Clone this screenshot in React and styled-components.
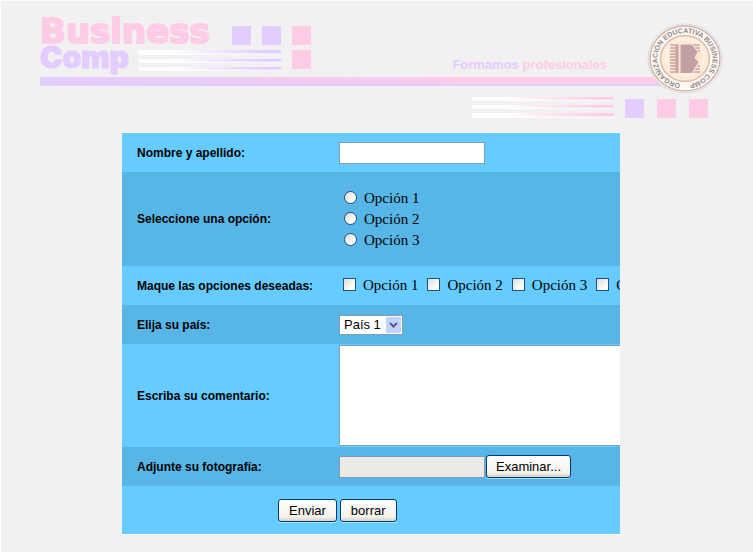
import React, { useRef, useState } from "react";
import styled, { createGlobalStyle } from "styled-components";

const LILAC = "#e3ccff";
const PINK = "#ffcce6";

const GlobalStyle = createGlobalStyle`
  *, *::before, *::after { box-sizing: border-box; }
  body {
    margin: 0;
    background: #f1f1f1;
    font-family: "Liberation Sans", Arial, sans-serif;
    color: #000;
  }
`;

const Page = styled.div`
  min-height: 100vh;
  border: solid #fff;
  border-width: 1px 0 0 1px;
`;

const Header = styled.header`
  position: relative;
  padding: 17px 45px 0 39px;
`;

const BrandLine = styled.div`
  display: flex;
  align-items: flex-start;
  height: ${(p) => (p.$last ? 33 : 26)}px;
`;

const BrandWord = styled.span`
  flex: none;
  width: ${(p) => p.$width}px;
  color: ${(p) => p.$color};
  font: ${(p) => p.$font};
  line-height: 26px;
  white-space: nowrap;
  -webkit-text-stroke: ${(p) => p.$stroke}px ${(p) => p.$color};
`;

const Squares = styled.div`
  display: flex;
  gap: 11px;
  padding-top: ${(p) => p.$top || 0}px;
  margin-left: ${(p) => p.$left || 0}px;
`;

const Square = styled.span`
  width: 19px;
  height: 19px;
  background: ${(p) => p.$color};
`;

const Stripes = styled.div`
  display: flex;
  flex-direction: column;
  justify-content: space-between;
  width: 142px;
  height: 21px;
  margin-top: ${(p) => p.$top || 0}px;
`;

const Stripe = styled.span`
  height: ${(p) => p.$h}px;
  background:
    linear-gradient(to right, #fff 20%, transparent 90%),
    linear-gradient(to bottom, ${(p) => p.$color} 45%, #fff);
`;

const Tagline = styled.p`
  margin: 13px 101px 0 auto;
  font-size: 13px;
  line-height: 16px;
  font-weight: bold;
  white-space: nowrap;
  color: ${PINK};
`;

const Accent = styled.span`
  color: ${LILAC};
`;

const Bar = styled.div`
  height: 9px;
  background:
    linear-gradient(to right, ${LILAC}, transparent 70%),
    linear-gradient(to bottom, ${PINK} 65%, ${LILAC} 75%);
`;

const LowerDecor = styled.div`
  display: flex;
  justify-content: flex-end;
  gap: 11px;
  padding-top: 11px;
`;

const LowerSquares = styled(Squares)`
  gap: 13px;
  padding-top: 2px;
`;

const Emblem = styled.svg`
  position: absolute;
  top: 22px;
  right: 30px;
  width: 76px;
  height: 71px;
`;

const Form = styled.form`
  margin: 14px 133px 0 121px;
  border: solid #fff;
  border-width: 1px 0;
  overflow: hidden;
`;

const Row = styled.div`
  display: grid;
  grid-template-columns: 202px minmax(0, 1fr);
  align-items: center;
  min-height: ${(p) => p.$h || 39}px;
  padding-left: 15px;
  background: ${(p) => (p.$dark ? "#58b6e7" : "#66ccff")};
`;

const RowLabel = styled.label`
  font-size: 12px;
  line-height: 16px;
  font-weight: bold;
`;

const Field = styled.div`
  display: flex;
  align-items: center;
`;

const TextBox = styled.input`
  width: 146px;
  height: 22px;
  padding: 1px 3px;
  border: 1px solid #7f9db9;
  border-radius: 0;
  outline: none;
  background: ${(p) => (p.readOnly ? "#ebeae5" : "#fff")};
  font: 13px "Liberation Sans", Arial, sans-serif;
`;

const RadioList = styled.div`
  padding: 1px 0 0 5px;
`;

const CheckList = styled.div`
  display: flex;
  gap: 9px;
  padding-left: 4px;
  overflow: hidden;
`;

const Choice = styled.label`
  display: flex;
  flex: none;
  align-items: center;
  gap: 7px;
  font: 15px "Liberation Serif", "Times New Roman", serif;
  line-height: 21px;
  white-space: nowrap;
`;

const Tick = styled.input`
  appearance: none;
  flex: none;
  width: 13px;
  height: 13px;
  margin: 0 0 2px;
  border: 1px solid #1c5180;
  border-radius: ${(p) => (p.type === "radio" ? "50%" : "0")};
  background: linear-gradient(135deg, #dcdcd7, #fff 75%);
  &:checked {
    background: radial-gradient(circle, #21a121 35%, #fff 40%);
  }
`;

const SelectWrap = styled.span`
  position: relative;
  display: inline-flex;
`;

const Select = styled.select`
  appearance: none;
  width: 64px;
  height: 20px;
  padding: 0 18px 0 4px;
  border: 1px solid #7f9db9;
  border-radius: 0;
  background: #fff;
  color: #000;
  font: 13px "Liberation Sans", Arial, sans-serif;
`;

const SelectArrow = styled.svg`
  position: absolute;
  top: 2px;
  right: 2px;
  width: 15px;
  height: 16px;
  pointer-events: none;
`;

const Comment = styled.textarea`
  display: block;
  flex: none;
  width: 110%;
  height: 101px;
  padding: 2px 4px;
  border: 1px solid #7f9db9;
  outline: none;
  resize: none;
  font: 13px "Liberation Mono", monospace;
`;

const Button = styled.button`
  height: 23px;
  padding: 0 ${(p) => p.$pad || 10}px;
  border: 1px solid #003c74;
  border-radius: 3px;
  background: linear-gradient(to bottom, #fff, #f3f2ec 80%, #d8d2c6);
  box-shadow: 0 1px 0 rgba(255, 255, 255, 0.5);
  color: #000;
  font: 13px "Liberation Sans", Arial, sans-serif;
  white-space: nowrap;
`;

const FileField = styled(Field)`
  gap: 1px;
`;

const Actions = styled.div`
  display: flex;
  align-items: center;
  gap: 3px;
  min-height: 48px;
  padding-left: 156px;
  background: #66ccff;
`;

function StripeGroup({ color, heights, top }) {
  return (
    <Stripes aria-hidden="true" $top={top}>
      {heights.map((h, i) => (
        <Stripe key={i} $color={color} $h={h} />
      ))}
    </Stripes>
  );
}

function BusinessEmblem() {
  const lines = Array.from({ length: 10 }, (_, i) => 22 + i * 3);
  return (
    <Emblem viewBox="0 0 76 71" role="img" aria-label="Organización Educativa Business Comp">
      <defs>
        <radialGradient id="gold" cx="50%" cy="48%" r="52%">
          <stop offset="0" stopColor="#fbd3ac" />
          <stop offset="0.55" stopColor="#fde2c6" />
          <stop offset="0.75" stopColor="#fff1e0" />
          <stop offset="1" stopColor="#f8d9bd" />
        </radialGradient>
        <path id="ring" d="M33.5 60.7 A27.5 25.5 0 1 1 42.5 60.7" />
      </defs>
      <ellipse cx="38" cy="35.5" rx="37" ry="34.5" fill="#fbfaf9" stroke="#dcd8d6" />
      <ellipse cx="38" cy="35.5" rx="35" ry="32.5" fill="#fffaf4" stroke="#cbb2ae" strokeWidth="1.5" />
      <ellipse cx="38" cy="35.5" rx="24.5" ry="23" fill="url(#gold)" stroke="#dcbcae" strokeWidth="1.5" />
      <ellipse cx="38" cy="35.5" rx="22.5" ry="21" fill="none" stroke="#fff4e8" />
      <text
        fontFamily="Liberation Sans, Arial, sans-serif"
        fontSize="7"
        fontWeight="bold"
        fill="#8e8788"
      >
        <textPath href="#ring">ORGANIZACIÓN EDUCATIVA BUSINESS COMP</textPath>
      </text>
      <g stroke="#c6a4a8" strokeWidth="1.4">
        {lines.map((y) => (
          <path key={y} d={`M23 ${y}H29M45 ${y}H${y > 29 && y < 42 ? 47 : 53}`} />
        ))}
      </g>
      <path d="M28.5 22L31.5 21V50.5L28.5 49.5Z" fill="#c6a4a8" />
      <path
        d="M33 21H45L51 29L48 35L52 39L45 50.5H33Z"
        fill="#c2a0a5"
        stroke="#fff0df"
      />
    </Emblem>
  );
}

const OPTIONS = [1, 2, 3];
const CHECKS = [1, 2, 3, 4];

export default function App() {
  const fileRef = useRef(null);
  const [fileName, setFileName] = useState("");

  return (
    <Page>
      <GlobalStyle />
      <Header>
        <BrandLine>
          <BrandWord
            $width={192}
            $color={PINK}
            $stroke={2}
            $font='bold 34px "DejaVu Sans", sans-serif'
          >
            Business
          </BrandWord>
          <Squares $top={8}>
            <Square $color={LILAC} />
            <Square $color={LILAC} />
            <Square $color={PINK} />
          </Squares>
        </BrandLine>
        <BrandLine $last>
          <BrandWord
            $width={99}
            $color={LILAC}
            $stroke={1}
            $font='900 30px Inter, "DejaVu Sans", sans-serif'
          >
            Comp
          </BrandWord>
          <StripeGroup color={LILAC} heights={[5, 4, 4]} top={6} />
          <Squares $top={6} $left={11}>
            <Square $color={PINK} />
          </Squares>
          <Tagline>
            <Accent>Formamos</Accent> profesionales
          </Tagline>
        </BrandLine>
        <Bar />
        <LowerDecor>
          <StripeGroup color={PINK} heights={[4, 4, 5]} />
          <LowerSquares>
            <Square $color={LILAC} />
            <Square $color={PINK} />
            <Square $color={PINK} />
          </LowerSquares>
        </LowerDecor>
        <BusinessEmblem />
      </Header>

      <Form onSubmit={(e) => e.preventDefault()} onReset={() => setFileName("")}>
        <Row>
          <RowLabel htmlFor="nombre">Nombre y apellido:</RowLabel>
          <Field>
            <TextBox id="nombre" type="text" />
          </Field>
        </Row>
        <Row $dark $h={94} role="radiogroup" aria-labelledby="opcion-label">
          <RowLabel as="span" id="opcion-label">Seleccione una opción:</RowLabel>
          <RadioList>
            {OPTIONS.map((n) => (
              <Choice key={n}>
                <Tick type="radio" name="opcion" value={n} />
                Opción {n}
              </Choice>
            ))}
          </RadioList>
        </Row>
        <Row role="group" aria-labelledby="deseadas-label">
          <RowLabel as="span" id="deseadas-label">Maque las opciones deseadas:</RowLabel>
          <CheckList>
            {CHECKS.map((n) => (
              <Choice key={n}>
                <Tick type="checkbox" name="deseadas" value={n} />
                Opción {n}
              </Choice>
            ))}
          </CheckList>
        </Row>
        <Row $dark>
          <RowLabel htmlFor="pais">Elija su país:</RowLabel>
          <Field>
            <SelectWrap>
              <Select id="pais">
                <option>País 1</option>
              </Select>
              <SelectArrow viewBox="0 0 15 16" aria-hidden="true">
                <rect width="15" height="16" rx="1" fill="#c2d3fb" />
                <path d="M4 6L7.5 9.5L11 6" fill="none" stroke="#4d6185" strokeWidth="2" />
              </SelectArrow>
            </SelectWrap>
          </Field>
        </Row>
        <Row $h={103}>
          <RowLabel htmlFor="comentario">Escriba su comentario:</RowLabel>
          <Field>
            <Comment id="comentario" />
          </Field>
        </Row>
        <Row $dark>
          <RowLabel htmlFor="foto">Adjunte su fotografía:</RowLabel>
          <FileField>
            <TextBox id="foto" type="text" readOnly value={fileName} />
            <Button type="button" $pad={9} onClick={() => fileRef.current.click()}>
              Examinar...
            </Button>
            <input
              ref={fileRef}
              type="file"
              hidden
              aria-label="Fotografía"
              onChange={(e) => setFileName(e.target.files[0]?.name || "")}
            />
          </FileField>
        </Row>
        <Actions>
          <Button type="submit">Enviar</Button>
          <Button type="reset">borrar</Button>
        </Actions>
      </Form>
    </Page>
  );
}
